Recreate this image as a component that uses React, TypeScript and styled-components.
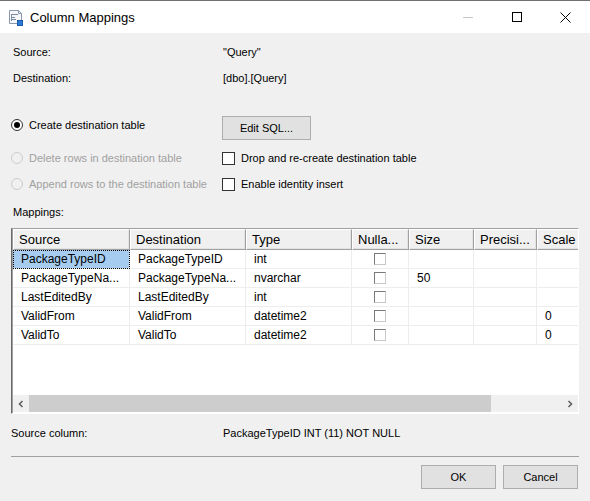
import React from 'react';
import styled, { createGlobalStyle } from 'styled-components';

const GlobalStyle = createGlobalStyle`
  html, body {
    margin: 0;
    padding: 0;
    background: #f0f0f0;
  }
  * {
    box-sizing: border-box;
  }
`;

const Window = styled.div`
  width: 590px;
  height: 501px;
  display: flex;
  flex-direction: column;
  background: #f0f0f0;
  font-family: "Liberation Sans", Arial, sans-serif;
  font-size: 11px;
  color: #000;
  overflow: hidden;
`;

const TitleBar = styled.div`
  height: 33px;
  flex: none;
  display: flex;
  align-items: center;
  background: #fff;
  border-top: 1px solid #707070;
  padding-left: 8px;
`;

const TitleText = styled.span`
  margin-left: 6px;
  font-size: 13px;
  color: #000;
  flex: 1;
`;

const WindowControls = styled.div`
  display: flex;
  height: 100%;
`;

const ControlButton = styled.div`
  width: 49px;
  display: flex;
  align-items: center;
  justify-content: center;
`;

const Body = styled.div`
  flex: 1;
  display: flex;
  flex-direction: column;
  padding: 0 11px 0 11px;
`;

const InfoGrid = styled.div`
  display: grid;
  grid-template-columns: 210px 1fr;
  row-gap: 10px;
  line-height: 16px;
  margin-top: 11px;
  padding-left: 2px;
`;

const Options = styled.div`
  display: grid;
  grid-template-columns: 211px 1fr;
  grid-template-rows: 24px 16px 16px;
  row-gap: 10px;
  margin-top: 30px;
  line-height: 16px;
`;

const OptionCell = styled.div<{ $top?: boolean }>`
  display: flex;
  align-items: center;
  align-self: ${p => (p.$top ? 'start' : 'center')};
  padding-top: ${p => (p.$top ? '1px' : '0')};
`;

const Radio = styled.span<{ $checked?: boolean; $disabled?: boolean }>`
  width: 12px;
  height: 12px;
  border-radius: 50%;
  border: 1px solid ${p => (p.$disabled ? '#cccccc' : '#333')};
  background: ${p => (p.$disabled ? '#f0f0f0' : '#fff')};
  display: inline-flex;
  align-items: center;
  justify-content: center;
  margin-right: 6px;
  flex: none;

  &::after {
    content: '';
    width: 6px;
    height: 6px;
    border-radius: 50%;
    background: #000;
    display: ${p => (p.$checked ? 'block' : 'none')};
  }
`;

const Label = styled.span<{ $disabled?: boolean }>`
  color: ${p => (p.$disabled ? '#a0a0a0' : '#000')};
  white-space: nowrap;
`;

const CheckBox = styled.span`
  width: 13px;
  height: 13px;
  border: 1px solid #333;
  background: #fff;
  margin-right: 6px;
  flex: none;
`;

const Button = styled.div<{ $width: number }>`
  width: ${p => p.$width}px;
  height: 24px;
  border: 1px solid #adadad;
  background: #e1e1e1;
  display: flex;
  align-items: center;
  justify-content: center;
  font-size: 11px;
`;

const SectionLabel = styled.div`
  line-height: 16px;
  margin-top: 12px;
  padding-left: 2px;
`;

const GridBox = styled.div`
  margin-top: 8px;
  height: 186px;
  width: 568px;
  display: flex;
  flex-direction: column;
  border: 1px solid;
  border-color: #a0a0a0 #fff #fff #696969;
  box-shadow: inset 1px 0 0 #a0a0a0;
  background: #fff;
  padding-left: 1px;
  overflow: hidden;
  font-size: 12px;
`;

const GridTable = styled.div`
  flex: 1;
  overflow: hidden;
`;

const HeaderRow = styled.div`
  display: flex;
  height: 21px;
`;

const HeaderCell = styled.div<{ $w: number }>`
  width: ${p => p.$w}px;
  flex: none;
  background: #f0f0f0;
  border-top: 1px solid #fff;
  border-left: 1px solid #fff;
  border-right: 1px solid #a0a0a0;
  border-bottom: 1px solid #a0a0a0;
  box-shadow: inset -1px -1px 0 #e3e3e3;
  font-size: 13px;
  line-height: 20px;
  padding-left: 5px;
  white-space: nowrap;
  overflow: hidden;
`;

const Row = styled.div`
  display: flex;
  height: 19px;
`;

const Cell = styled.div<{ $w: number; $selected?: boolean; $center?: boolean }>`
  width: ${p => p.$w}px;
  flex: none;
  border-right: 1px solid #ededed;
  border-bottom: 1px solid #ededed;
  line-height: 18px;
  padding-left: 8px;
  white-space: nowrap;
  overflow: hidden;
  display: flex;
  align-items: center;
  justify-content: ${p => (p.$center ? 'center' : 'flex-start')};
  ${p =>
    p.$selected &&
    `
    background: #a6cdf0;
    outline: 1px dotted #000;
    outline-offset: -1px;
  `}
`;

const CellCheck = styled.span`
  width: 12px;
  height: 12px;
  border: 1px solid;
  border-color: #7a7a7a #c8c8c8 #c8c8c8 #7a7a7a;
  background: #fff;
  margin-left: -8px;
`;

const HScroll = styled.div`
  height: 17px;
  flex: none;
  display: flex;
  background: #f0f0f0;
  margin-bottom: 1px;
`;

const ScrollArrow = styled.div`
  width: 16px;
  display: flex;
  align-items: center;
  justify-content: center;
`;

const ScrollTrack = styled.div`
  flex: 1;
  display: flex;
`;

const ScrollThumb = styled.div`
  width: 462px;
  background: #cdcdcd;
`;

const Footer = styled.div`
  display: grid;
  grid-template-columns: 212px 1fr;
  line-height: 16px;
  margin-top: 11px;
`;

const Separator = styled.div`
  margin-top: 15px;
  height: 1px;
  width: 568px;
  background: #a0a0a0;
`;

const ButtonRow = styled.div`
  display: flex;
  justify-content: flex-end;
  gap: 7px;
  margin-top: 8px;
  padding-right: 1px;
`;

const columns = [
  { key: 'src', title: 'Source', w: 117 },
  { key: 'dst', title: 'Destination', w: 116 },
  { key: 'type', title: 'Type', w: 106 },
  { key: 'null', title: 'Nulla...', w: 57 },
  { key: 'size', title: 'Size', w: 65 },
  { key: 'prec', title: 'Precisi...', w: 63 },
  { key: 'scale', title: 'Scale', w: 70 },
];

const rows = [
  { src: 'PackageTypeID', dst: 'PackageTypeID', type: 'int', size: '', scale: '' },
  { src: 'PackageTypeNa...', dst: 'PackageTypeNa...', type: 'nvarchar', size: '50', scale: '' },
  { src: 'LastEditedBy', dst: 'LastEditedBy', type: 'int', size: '', scale: '' },
  { src: 'ValidFrom', dst: 'ValidFrom', type: 'datetime2', size: '', scale: '0' },
  { src: 'ValidTo', dst: 'ValidTo', type: 'datetime2', size: '', scale: '0' },
];

function TitleIcon() {
  return (
    <svg width="16" height="17" viewBox="0 0 16 17">
      <path d="M1.5 1.5h9l3 3v10h-12z" fill="#f4f6f9" stroke="#8a98ad" />
      <path d="M10.5 1.5v3h3" fill="none" stroke="#8a98ad" />
      <rect x="4" y="5" width="6" height="1" fill="#7d8ca3" />
      <rect x="4" y="8" width="3" height="1" fill="#7d8ca3" />
      <rect x="4" y="10" width="4" height="1" fill="#7d8ca3" />
      <rect x="3" y="5" width="1" height="7" fill="#7d8ca3" />
      <rect x="9.5" y="11.5" width="5" height="5" fill="#2b7ad6" stroke="#1c5aa8" />
    </svg>
  );
}

function App() {
  return (
    <Window>
      <GlobalStyle />
      <TitleBar>
        <TitleIcon />
        <TitleText>Column Mappings</TitleText>
        <WindowControls>
          <ControlButton>
            <svg width="10" height="10" viewBox="0 0 10 10">
              <rect x="0" y="5" width="10" height="1" fill="#c6c6c6" />
            </svg>
          </ControlButton>
          <ControlButton>
            <svg width="10" height="10" viewBox="0 0 10 10">
              <rect x="0.5" y="0.5" width="9" height="9" fill="none" stroke="#000" />
            </svg>
          </ControlButton>
          <ControlButton>
            <svg width="11" height="11" viewBox="0 0 11 11">
              <path d="M0.5 0.5l10 10M10.5 0.5l-10 10" stroke="#000" strokeWidth="1" />
            </svg>
          </ControlButton>
        </WindowControls>
      </TitleBar>

      <Body>
        <InfoGrid>
          <span>Source:</span>
          <span>"Query"</span>
          <span>Destination:</span>
          <span>[dbo].[Query]</span>
        </InfoGrid>

        <Options>
          <OptionCell $top>
            <Radio $checked />
            <Label>Create destination table</Label>
          </OptionCell>
          <OptionCell>
            <Button $width={89}>Edit SQL...</Button>
          </OptionCell>
          <OptionCell>
            <Radio $disabled />
            <Label $disabled>Delete rows in destination table</Label>
          </OptionCell>
          <OptionCell>
            <CheckBox />
            <Label>Drop and re-create destination table</Label>
          </OptionCell>
          <OptionCell>
            <Radio $disabled />
            <Label $disabled>Append rows to the destination table</Label>
          </OptionCell>
          <OptionCell>
            <CheckBox />
            <Label>Enable identity insert</Label>
          </OptionCell>
        </Options>

        <SectionLabel>Mappings:</SectionLabel>

        <GridBox>
          <GridTable>
            <HeaderRow>
              {columns.map(c => (
                <HeaderCell key={c.key} $w={c.w}>{c.title}</HeaderCell>
              ))}
            </HeaderRow>
            {rows.map((r, i) => (
              <Row key={r.src}>
                <Cell $w={117} $selected={i === 0}>{r.src}</Cell>
                <Cell $w={116}>{r.dst}</Cell>
                <Cell $w={106}>{r.type}</Cell>
                <Cell $w={57} $center><CellCheck /></Cell>
                <Cell $w={65}>{r.size}</Cell>
                <Cell $w={63}></Cell>
                <Cell $w={70}>{r.scale}</Cell>
              </Row>
            ))}
          </GridTable>
          <HScroll>
            <ScrollArrow>
              <svg width="8" height="8" viewBox="0 0 8 8">
                <path d="M5.5 1L2.5 4l3 3" fill="none" stroke="#606060" strokeWidth="1.6" />
              </svg>
            </ScrollArrow>
            <ScrollTrack>
              <ScrollThumb />
            </ScrollTrack>
            <ScrollArrow>
              <svg width="8" height="8" viewBox="0 0 8 8">
                <path d="M2.5 1l3 3-3 3" fill="none" stroke="#606060" strokeWidth="1.6" />
              </svg>
            </ScrollArrow>
          </HScroll>
        </GridBox>

        <Footer>
          <span>Source column:</span>
          <span>PackageTypeID INT (11) NOT NULL</span>
        </Footer>

        <Separator />

        <ButtonRow>
          <Button $width={75}>OK</Button>
          <Button $width={75}>Cancel</Button>
        </ButtonRow>
      </Body>
    </Window>
  );
}

export default App;
